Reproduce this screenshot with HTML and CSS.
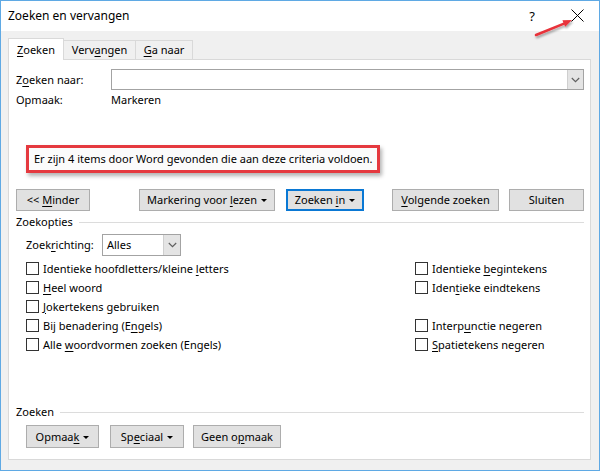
FILE: index.html
```html
<!DOCTYPE html>
<html lang="nl">
<head>
<meta charset="utf-8">
<title>Zoeken en vervangen</title>
<link rel="stylesheet" href="styles.css">
</head>
<body>
<div class="window">
  <div class="titlebar">
    <span class="title">Zoeken en vervangen</span>
    <div class="title-actions">
      <span class="help">?</span>
      <svg class="close" width="13" height="13" viewBox="0 0 13 13"><path d="M0.5 0.5 L12.5 12.5 M12.5 0.5 L0.5 12.5" stroke="#000" stroke-width="1" fill="none"/></svg>
    </div>
  </div>
  <div class="client">
    <div class="tabs">
      <div class="tab active"><u>Z</u>oeken</div>
      <div class="tab tab-vervangen">Verv<u>a</u>ngen</div>
      <div class="tab tab-ganaar"><u>G</u>a naar</div>
    </div>
    <div class="panel">
      <div class="row-find">
        <span class="field-label">Z<u>o</u>eken naar:</span>
        <div class="combo combo-find">
          <div class="combo-text"></div>
          <div class="combo-btn"><svg width="9" height="6" viewBox="0 0 9 6"><path d="M0.8 1 L4.5 4.6 L8.2 1" stroke="#606060" stroke-width="1.2" fill="none"/></svg></div>
        </div>
      </div>
      <div class="row-format">
        <span class="field-label">Opmaak:</span>
        <span>Markeren</span>
      </div>
      <div class="message">Er zijn 4 items door Word gevonden die aan deze criteria voldoen.</div>
      <div class="button-row">
        <div class="btn btn-minder"><span>&lt;&lt; <u>M</u>inder</span></div>
        <div class="btn btn-markering"><span>Markering voor <u>l</u>ezen</span><span class="caret"></span></div>
        <div class="btn btn-zoekenin focused"><span>Zoeken <u>i</u>n</span><span class="caret"></span></div>
        <div class="btn btn-volgende"><span><u>V</u>olgende zoeken</span></div>
        <div class="btn btn-sluiten"><span>Sluiten</span></div>
      </div>
      <div class="group-header group-options"><span>Zoekopties</span><div class="group-line"></div></div>
      <div class="row-direction">
        <span class="direction-label">Zoek<u>r</u>ichting:</span>
        <div class="combo combo-direction">
          <div class="combo-text">Alles</div>
          <div class="combo-btn"><svg width="9" height="6" viewBox="0 0 9 6"><path d="M0.8 1 L4.5 4.6 L8.2 1" stroke="#606060" stroke-width="1.2" fill="none"/></svg></div>
        </div>
      </div>
      <div class="checks">
        <div class="check"><span class="box"></span><span>Identieke hoofdletters/kleine <u>l</u>etters</span></div>
        <div class="check"><span class="box"></span><span>Identieke <u>b</u>egintekens</span></div>
        <div class="check"><span class="box"></span><span><u>H</u>eel woord</span></div>
        <div class="check"><span class="box"></span><span>Iden<u>t</u>ieke eindtekens</span></div>
        <div class="check"><span class="box"></span><span><u>J</u>okertekens gebruiken</span></div>
        <div class="check-empty"></div>
        <div class="check"><span class="box"></span><span>Bij benadering (E<u>n</u>gels)</span></div>
        <div class="check"><span class="box"></span><span>Interp<u>u</u>nctie negeren</span></div>
        <div class="check"><span class="box"></span><span>Alle <u>w</u>oordvormen zoeken (Engels)</span></div>
        <div class="check"><span class="box"></span><span><u>S</u>patietekens negeren</span></div>
      </div>
      <div class="bottom-group">
        <div class="group-header"><span>Zoeken</span><div class="group-line"></div></div>
        <div class="bottom-buttons">
          <div class="btn btn-opmaak"><span>Opmaa<u>k</u></span><span class="caret"></span></div>
          <div class="btn btn-speciaal"><span>Sp<u>e</u>ciaal</span><span class="caret"></span></div>
          <div class="btn btn-geen"><span>Geen o<u>p</u>maak</span></div>
        </div>
      </div>
    </div>
  </div>
  <svg class="annotation" width="600" height="471" viewBox="0 0 600 471">
    <defs>
      <filter id="sh" x="-20%" y="-50%" width="160%" height="250%">
        <feDropShadow dx="1" dy="2" stdDeviation="1.2" flood-color="#000" flood-opacity="0.35"/>
      </filter>
    </defs>
    <g filter="url(#sh)">
      <line x1="536" y1="35" x2="564" y2="23.6" stroke="#e8333a" stroke-width="2.6" stroke-linecap="round"/>
      <polygon points="572,20 565.2,26.8 562.4,20.3" fill="#e8333a"/>
    </g>
  </svg>
</div>
</body>
</html>
```

FILE: styles.css
```css
* { box-sizing: border-box; }
html, body { margin: 0; padding: 0; background: #fff; }
body {
  font-family: "Noto Sans", "Open Sans", "DejaVu Sans", sans-serif;
  font-size: 11px;
  line-height: 16px;
  color: #000;
}
u { text-decoration-thickness: 1px; text-underline-offset: 2px; }

.window {
  position: relative;
  width: 600px;
  height: 471px;
  border: 1px solid #5fa9e4;
  background: #f0f0f0;
  display: flex;
  flex-direction: column;
  overflow: hidden;
}

.titlebar {
  flex: none;
  height: 30px;
  background: #fff;
  display: flex;
  align-items: center;
  padding-left: 7px;
}
.title { font-size: 12px; }
.title-actions { margin-left: auto; display: flex; align-items: center; }
.help { font-size: 13px; margin-right: 36px; margin-top: -1px; }
.close { display: block; margin-right: 15px; margin-top: -1px; }

.client {
  flex: 1;
  display: flex;
  flex-direction: column;
  padding: 7px 8px 10px 7px;
}

.tabs {
  flex: none;
  display: flex;
  align-items: flex-end;
  height: 21px;
  position: relative;
  z-index: 1;
}
.tab {
  height: 19px;
  border: 1px solid #d9d9d9;
  border-bottom: none;
  background: #f0f0f0;
  text-align: center;
  padding-top: 1px;
  margin-left: -1px;
}
.tab.active {
  width: 56px;
  height: 22px;
  margin-left: 0;
  margin-bottom: -1px;
  background: #fff;
  padding-top: 3px;
  position: relative;
  z-index: 2;
}
.tab-vervangen { width: 73px; }
.tab-ganaar { width: 58px; }

.panel {
  flex: 1;
  background: #fff;
  border: 1px solid #d9d9d9;
  display: flex;
  flex-direction: column;
  padding: 0 6px 11px 7px;
}

.row-find {
  display: flex;
  align-items: center;
  margin-top: 9px;
  height: 21px;
}
.field-label { width: 95px; flex: none; }

.combo {
  height: 21px;
  border: 1px solid #a3a3a3;
  background: #fff;
  display: flex;
}
.combo-find { flex: 1; }
.combo-text { flex: 1; padding-left: 4px; line-height: 19px; }
.combo-btn {
  width: 16px;
  flex: none;
  background: #e4e4e4;
  border-left: 1px solid #cfcfcf;
  display: flex;
  align-items: center;
  justify-content: center;
}
.combo-btn svg { display: block; }

.row-format {
  display: flex;
  margin-top: 1px;
  height: 17px;
  line-height: 17px;
}

.message {
  align-self: flex-start;
  width: 354px;
  height: 28px;
  margin: 37px 0 0 10px;
  border: 3px solid #e5393f;
  padding: 0 5px;
  line-height: 22px;
  background: #fbfbfb;
  box-shadow: 2px 3px 4px rgba(0, 0, 0, 0.3);
  white-space: nowrap;
}

.button-row {
  display: flex;
  margin-top: 16px;
  height: 22px;
}
.btn {
  height: 22px;
  border: 1px solid #adadad;
  background: #e1e1e1;
  display: flex;
  align-items: center;
  justify-content: center;
  white-space: nowrap;
  flex: none;
}
.btn.focused { border: 2px solid #0a78d4; }
.caret {
  display: inline-block;
  width: 0;
  height: 0;
  border-left: 3px solid transparent;
  border-right: 3px solid transparent;
  border-top: 3px solid #000;
  margin-left: 4px;
  margin-top: 1px;
}
.btn-minder { width: 74px; }
.btn-markering { width: 136px; margin-left: 49px; }
.btn-zoekenin { width: 78px; margin-left: 11px; }
.btn-volgende { width: 107px; margin-left: 28px; }
.btn-sluiten { width: 75px; margin-left: 10px; }

.group-header {
  display: flex;
  align-items: center;
  height: 16px;
}
.group-options { margin-top: 3px; }
.group-line {
  flex: 1;
  height: 1px;
  background: #dcdcdc;
  margin-left: 6px;
}

.row-direction {
  display: flex;
  align-items: center;
  margin-top: 4px;
  height: 22px;
  padding-left: 10px;
}
.direction-label { width: 76px; flex: none; }
.combo-direction { width: 79px; height: 22px; }
.combo-direction .combo-btn { width: 17px; }

.checks {
  display: grid;
  grid-template-columns: 389px 1fr;
  grid-auto-rows: 19px;
  margin-top: 3px;
  padding-left: 10px;
}
.check {
  display: flex;
  align-items: center;
  white-space: nowrap;
}
.box {
  width: 13px;
  height: 13px;
  border: 1px solid #333;
  background: #fff;
  margin-right: 4px;
  flex: none;
}

.bottom-group { margin-top: auto; }
.bottom-buttons {
  display: flex;
  margin-top: 5px;
  padding-left: 10px;
}
.bottom-buttons .btn { height: 23px; }
.btn-opmaak { width: 73px; }
.btn-speciaal { width: 74px; margin-left: 11px; }
.btn-geen { width: 88px; margin-left: 9px; }

.annotation {
  position: absolute;
  top: -1px;
  left: -1px;
  pointer-events: none;
}
```
